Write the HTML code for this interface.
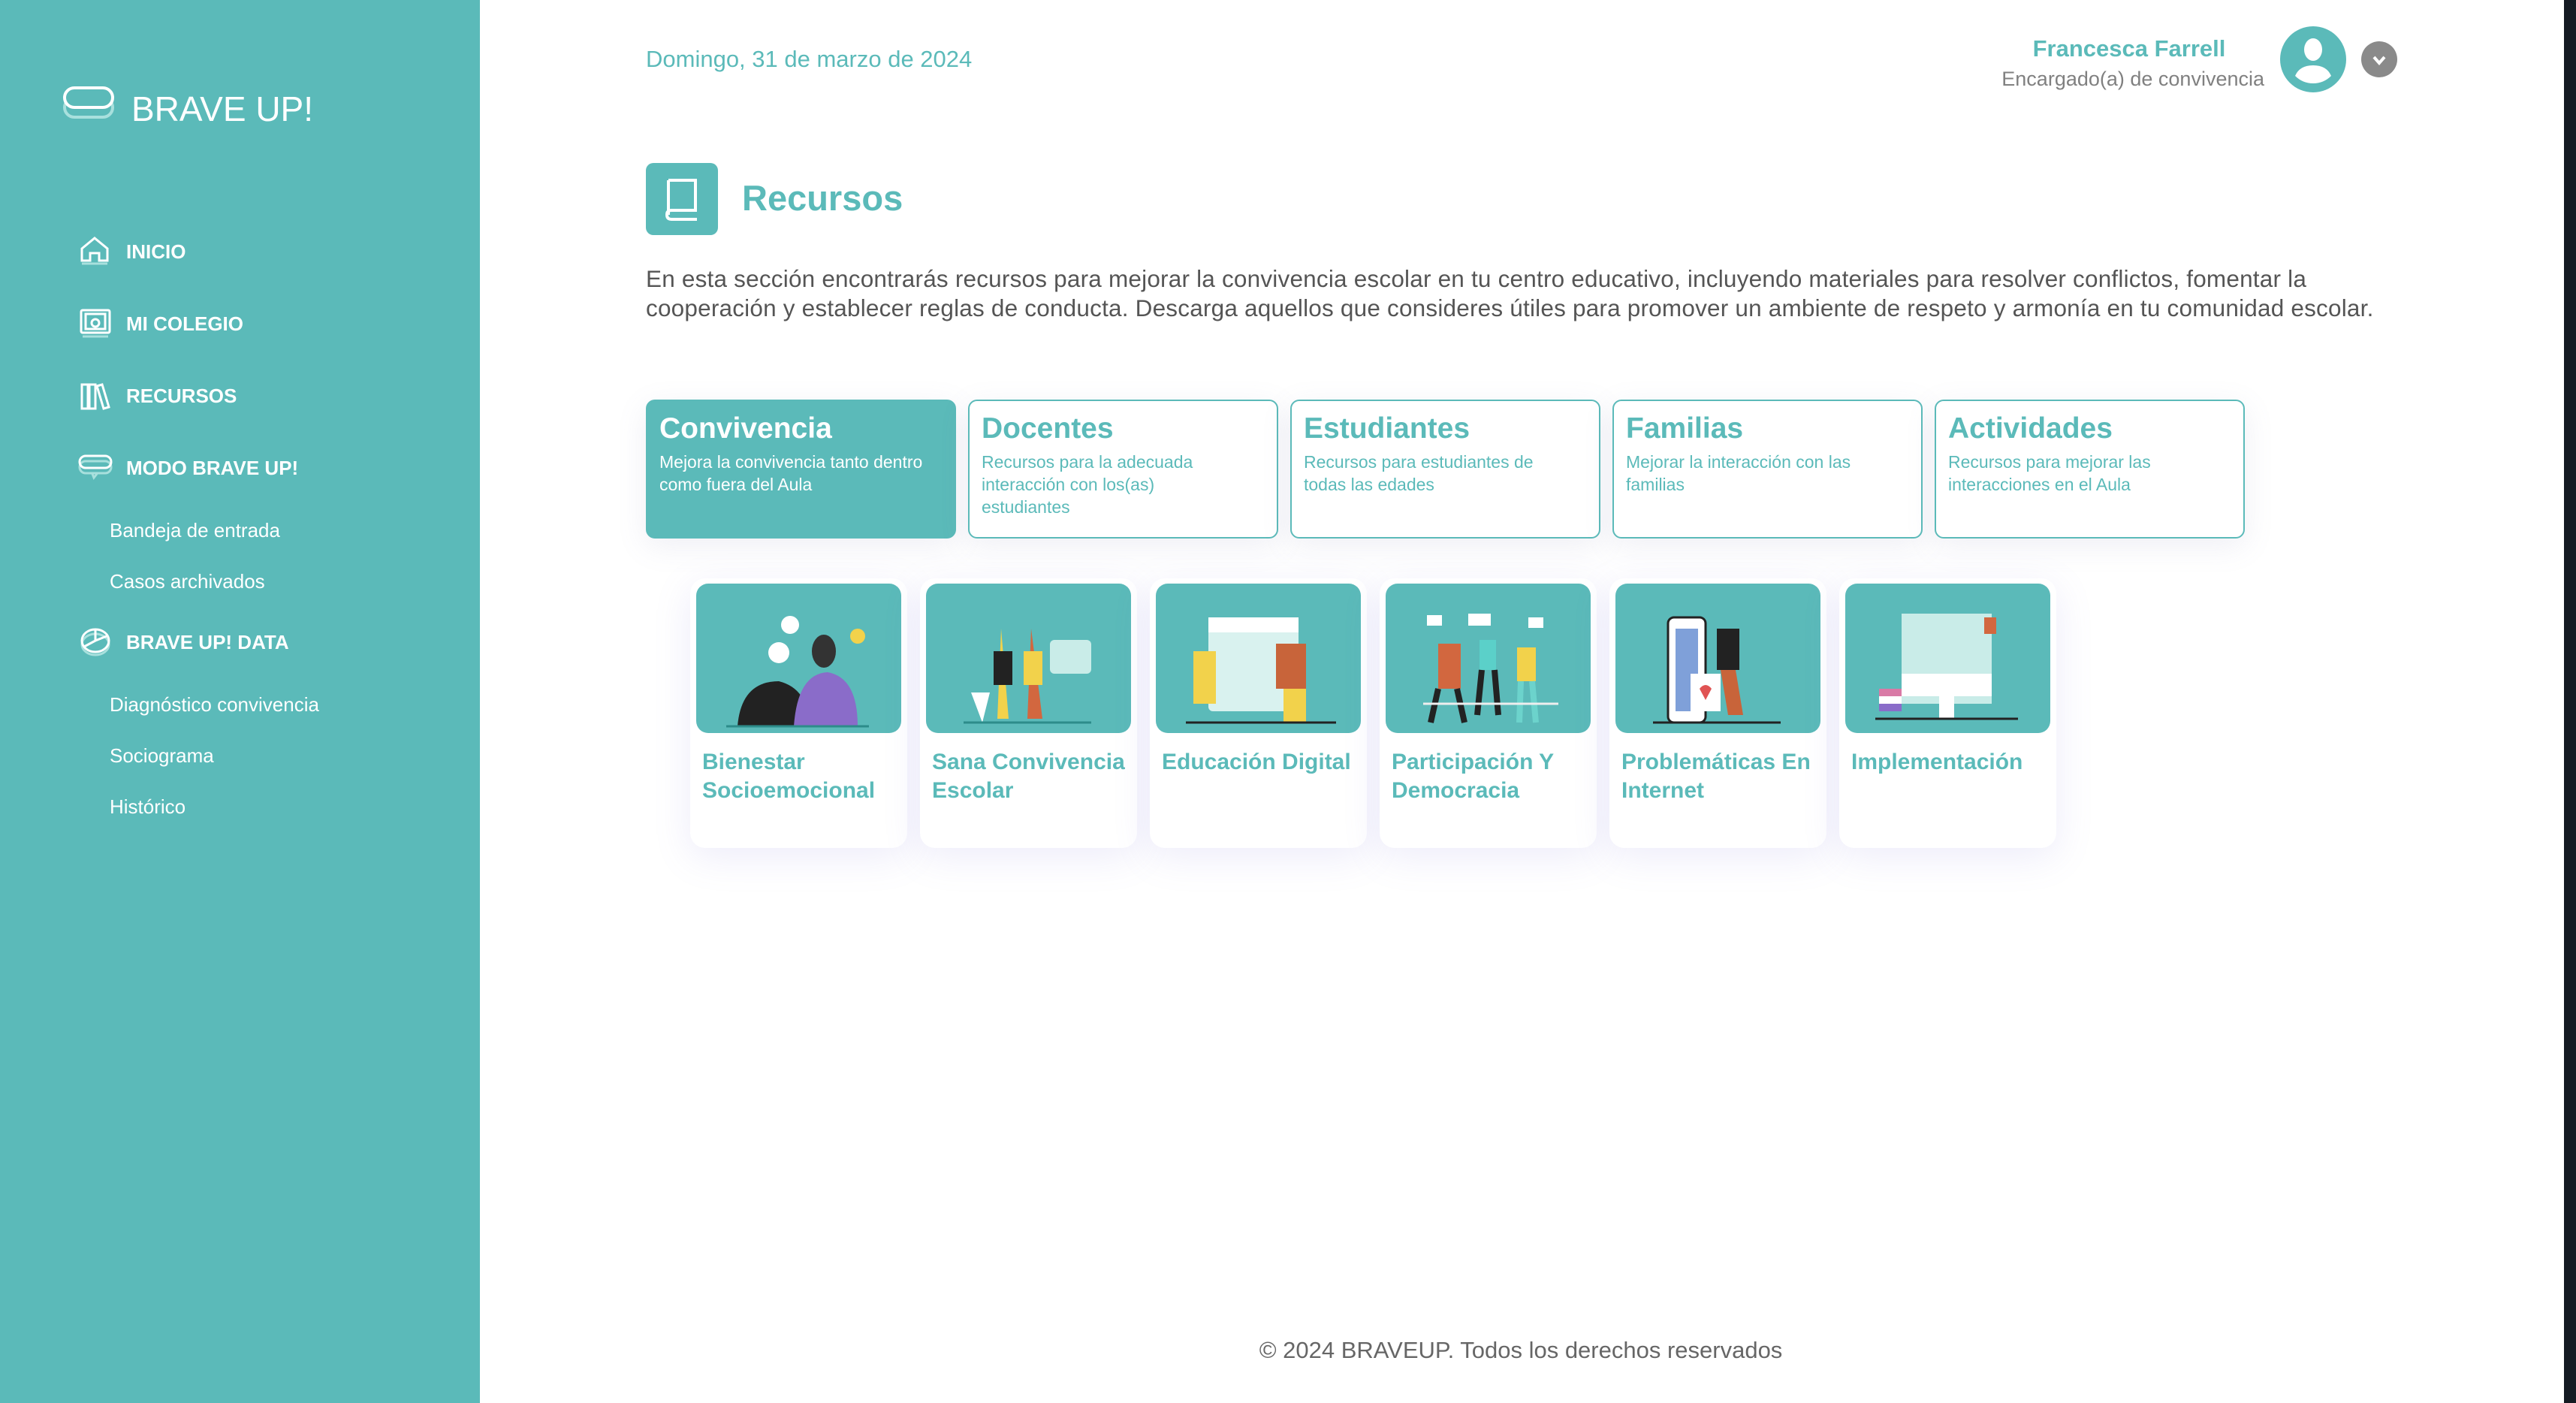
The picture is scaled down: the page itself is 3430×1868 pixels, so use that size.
<!DOCTYPE html>
<html><head><meta charset="utf-8">
<style>
*{margin:0;padding:0;box-sizing:border-box}
body{width:3430px;height:1868px;overflow:hidden;background:#fff;font-family:"Liberation Sans",Arial,sans-serif;position:relative}
.sb{position:absolute;left:0;top:0;width:639px;height:1868px;background:#5bbab9;color:#fff}
.edge{position:absolute;right:0;top:0;width:16px;height:1868px;background:#151a22}
.a{position:absolute;white-space:nowrap}
.nav{font-weight:bold;font-size:26px;left:168px}
.sub{font-size:26px;left:146px}
.teal{color:#5bbab9}
.tab{position:absolute;top:532px;width:413px;height:185px;border:2px solid #5bbab9;border-radius:12px;background:#fff;padding:14px 16px;box-shadow:0 10px 40px rgba(120,120,170,.12)}
.tab h3{font-size:39px;color:#5bbab9;font-weight:bold;line-height:46px}
.tab p{font-size:23px;line-height:30px;color:#5bbab9;margin-top:6px;width:370px}
.tab.on{background:#5bbab9}
.tab.on h3,.tab.on p{color:#fff}
.card{position:absolute;top:770px;width:289px;height:359px;background:#fff;border-radius:20px;box-shadow:0 12px 50px rgba(130,120,220,.14)}
.card .img{position:absolute;left:8px;top:7px;width:273px;height:199px;background:#5bbab9;border-radius:16px;overflow:hidden}
.card .t{position:absolute;left:16px;top:226px;font-size:30px;line-height:38px;font-weight:bold;color:#5bbab9;width:270px}
</style></head><body>
<div class="sb">
  <svg class="a" style="left:83px;top:112px" width="72" height="60" viewBox="0 0 72 60"><rect x="3" y="18" width="64" height="26" rx="13" fill="none" stroke="#a8e0dd" stroke-width="4"/><rect x="3" y="5" width="64" height="26" rx="13" fill="#5bbab9" stroke="#fff" stroke-width="4"/></svg>
  <div class="a" style="left:175px;top:118px;font-size:46px;font-weight:300">BRAVE <b>UP!</b></div>

  <svg class="a" style="left:106px;top:313px" width="40" height="40" viewBox="0 0 40 40" fill="none" stroke="#fff" stroke-width="3"><path d="M3 18 L20 4 L37 18 V34 H26 V24 H14 V34 H3 Z"/><path d="M3 38 H37" stroke="#a8e0dd"/></svg>
  <div class="a nav" style="top:320px">INICIO</div>
  <svg class="a" style="left:106px;top:410px" width="42" height="40" viewBox="0 0 42 40" fill="none" stroke="#fff" stroke-width="3"><rect x="2" y="3" width="38" height="30" rx="2"/><rect x="8" y="8" width="26" height="20"/><circle cx="21" cy="20" r="5"/><path d="M4 38 H38" stroke="#a8e0dd"/></svg>
  <div class="a nav" style="top:416px">MI COLEGIO</div>
  <svg class="a" style="left:106px;top:508px" width="42" height="40" viewBox="0 0 42 40" fill="none" stroke="#fff" stroke-width="3"><rect x="3" y="4" width="8" height="32"/><rect x="13" y="4" width="8" height="32"/><path d="M23 6 L30 4 L39 34 L32 36 Z"/></svg>
  <div class="a nav" style="top:512px">RECURSOS</div>
  <svg class="a" style="left:103px;top:604px" width="48" height="40" viewBox="0 0 48 40" fill="none" stroke="#fff" stroke-width="3"><rect x="3" y="10" width="42" height="16" rx="8" stroke="#a8e0dd"/><rect x="3" y="3" width="42" height="16" rx="8"/><path d="M20 27 L22 32 L26 27" stroke="#a8e0dd"/></svg>
  <div class="a nav" style="top:608px">MODO BRAVE UP!</div>
  <div class="a sub" style="top:691px">Bandeja de entrada</div>
  <div class="a sub" style="top:759px">Casos archivados</div>
  <svg class="a" style="left:106px;top:834px" width="42" height="42" viewBox="0 0 42 42" fill="none" stroke="#fff" stroke-width="3"><ellipse cx="21" cy="24" rx="18" ry="14" stroke="#a8e0dd"/><ellipse cx="21" cy="19" rx="18" ry="15"/><path d="M21 4 V19 L36 13 M21 19 L6 27"/></svg>
  <div class="a nav" style="top:840px">BRAVE UP! DATA</div>
  <div class="a sub" style="top:923px">Diagnóstico convivencia</div>
  <div class="a sub" style="top:991px">Sociograma</div>
  <div class="a sub" style="top:1059px">Histórico</div>
</div>

<div class="a teal" style="left:860px;top:61px;font-size:31px">Domingo, 31 de marzo de 2024</div>
<div class="a teal" style="right:422px;top:47px;font-size:31px;font-weight:bold;width:500px;text-align:center;right:413px"></div>
<div class="a teal" style="left:2600px;width:470px;text-align:center;top:47px;font-size:31px;font-weight:bold">Francesca Farrell</div>
<div class="a" style="right:415px;top:90px;font-size:27px;color:#808080">Encargado(a) de convivencia</div>
<svg class="a" style="left:3036px;top:35px" width="88" height="88" viewBox="0 0 88 88"><circle cx="44" cy="44" r="44" fill="#5bbab9"/><ellipse cx="44" cy="31" rx="12" ry="15" fill="#fff"/><path d="M20 66 Q26 52 44 52 Q62 52 68 66 Q58 76 44 76 Q30 76 20 66Z" fill="#fff"/></svg>
<svg class="a" style="left:3144px;top:55px" width="48" height="48" viewBox="0 0 48 48"><circle cx="24" cy="24" r="24" fill="#8a8a8a"/><path d="M17 21 L24 29 L31 21" fill="none" stroke="#fff" stroke-width="4"/></svg>

<div class="a" style="left:860px;top:217px;width:96px;height:96px;background:#5bbab9;border-radius:10px"></div>
<svg class="a" style="left:880px;top:236px" width="56" height="60" viewBox="0 0 56 60" fill="none" stroke="#fff" stroke-width="4"><path d="M10 4 H46 V44 H14 Q8 44 8 50 Q8 56 14 56 H48"/><path d="M10 4 V50"/></svg>
<div class="a teal" style="left:988px;top:236px;font-size:47px;font-weight:bold">Recursos</div>
<div class="a" style="left:860px;top:352px;font-size:31.5px;line-height:39px;color:#555;letter-spacing:0.2px">En esta sección encontrarás recursos para mejorar la convivencia escolar en tu centro educativo, incluyendo materiales para resolver conflictos, fomentar la<br>cooperación y establecer reglas de conducta. Descarga aquellos que consideres útiles para promover un ambiente de respeto y armonía en tu comunidad escolar.</div>

<div class="tab on" style="left:860px"><h3>Convivencia</h3><p>Mejora la convivencia tanto dentro como fuera del Aula</p></div>
<div class="tab" style="left:1289px"><h3>Docentes</h3><p>Recursos para la adecuada<br>interacción con los(as)<br>estudiantes</p></div>
<div class="tab" style="left:1718px"><h3>Estudiantes</h3><p>Recursos para estudiantes de<br>todas las edades</p></div>
<div class="tab" style="left:2147px"><h3>Familias</h3><p>Mejorar la interacción con las<br>familias</p></div>
<div class="tab" style="left:2576px"><h3>Actividades</h3><p>Recursos para mejorar las<br>interacciones en el Aula</p></div>

<div class="card" style="left:919px"><div class="img"><svg width="273" height="199"><circle cx="110" cy="92" r="14" fill="#fff"/><path d="M55 190 Q60 130 110 130 Q150 140 150 190Z" fill="#222"/><ellipse cx="170" cy="90" rx="16" ry="22" fill="#333"/><path d="M130 190 Q135 120 175 118 Q215 125 215 190Z" fill="#8a6cc9"/><circle cx="215" cy="70" r="10" fill="#f2d24b"/><circle cx="125" cy="55" r="12" fill="#fff"/><path d="M40 190H230" stroke="#2d8c8a" stroke-width="3"/></svg></div><div class="t">Bienestar Socioemocional</div></div>
<div class="card" style="left:1225px"><div class="img"><svg width="273" height="199"><path d="M100 60 L95 180 L110 180Z" fill="#f2d24b"/><path d="M140 60 L135 180 L155 180Z" fill="#d2673f"/><rect x="90" y="90" width="25" height="45" fill="#222"/><rect x="130" y="90" width="25" height="45" fill="#f2d24b"/><rect x="165" y="75" width="55" height="45" rx="6" fill="#c9ece8"/><path d="M60 145 L75 185 L85 145Z" fill="#fff"/><path d="M50 185H220" stroke="#2d8c8a" stroke-width="3"/></svg></div><div class="t">Sana Convivencia Escolar</div></div>
<div class="card" style="left:1531px"><div class="img"><svg width="273" height="199"><rect x="70" y="45" width="120" height="125" rx="6" fill="#d9f2ef"/><rect x="70" y="45" width="120" height="20" fill="#fff"/><rect x="50" y="90" width="30" height="70" fill="#f2d24b"/><rect x="160" y="80" width="40" height="60" fill="#c8643a"/><rect x="170" y="140" width="30" height="45" fill="#f2d24b"/><path d="M40 185H240" stroke="#222" stroke-width="3"/></svg></div><div class="t">Educación Digital</div></div>
<div class="card" style="left:1837px"><div class="img"><svg width="273" height="199"><rect x="70" y="80" width="30" height="60" fill="#d2673f"/><path d="M70 140 L60 185 M95 140 L105 185" stroke="#222" stroke-width="8"/><rect x="125" y="75" width="22" height="40" fill="#5bd0c9"/><path d="M128 115 L122 175 M145 115 L150 175" stroke="#222" stroke-width="8"/><rect x="175" y="85" width="25" height="45" fill="#f2d24b"/><path d="M180 130 L178 185 M195 130 L200 185" stroke="#6cd3cc" stroke-width="8"/><rect x="55" y="42" width="20" height="14" fill="#fff"/><rect x="110" y="40" width="30" height="16" fill="#fff"/><rect x="190" y="45" width="20" height="14" fill="#fff"/><path d="M50 160H230" stroke="#eee" stroke-width="3"/></svg></div><div class="t">Participación Y Democracia</div></div>
<div class="card" style="left:2143px"><div class="img"><svg width="273" height="199"><rect x="70" y="45" width="50" height="140" rx="8" fill="#fff" stroke="#222" stroke-width="3"/><rect x="80" y="60" width="30" height="110" fill="#7fa0d9"/><rect x="100" y="120" width="40" height="50" fill="#fff"/><path d="M112 140 Q120 130 128 140 L120 155Z" fill="#e05353"/><rect x="135" y="60" width="30" height="55" fill="#222"/><path d="M140 115 L150 175 L170 175 L160 115Z" fill="#c8643a"/><path d="M50 185H220" stroke="#222" stroke-width="3"/></svg></div><div class="t">Problemáticas En Internet</div></div>
<div class="card" style="left:2449px"><div class="img"><svg width="273" height="199"><rect x="75" y="40" width="120" height="120" fill="#c9ece8"/><rect x="75" y="120" width="120" height="30" fill="#fff"/><rect x="125" y="150" width="20" height="30" fill="#fff"/><rect x="185" y="45" width="16" height="22" fill="#d2673f"/><rect x="45" y="140" width="30" height="10" fill="#d97aa6"/><rect x="45" y="150" width="30" height="10" fill="#fff"/><rect x="45" y="160" width="30" height="10" fill="#8a6cc9"/><path d="M40 180H230" stroke="#222" stroke-width="3"/></svg></div><div class="t">Implementación</div></div>

<div class="a" style="left:1560px;width:930px;text-align:center;top:1780px;font-size:31px;color:#666">© 2024 BRAVEUP. Todos los derechos reservados</div>
<div class="edge"></div>
</body></html>
